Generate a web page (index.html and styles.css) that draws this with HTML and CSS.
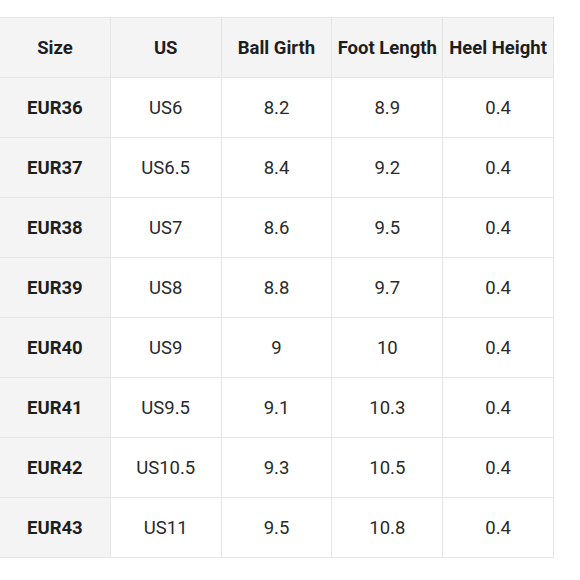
FILE: index.html
```html
<!DOCTYPE html>
<html>
<head>
<meta charset="utf-8">
<link rel="stylesheet" href="styles.css">
</head>
<body>
<table class="size-table">
  <thead>
    <tr><th>Size</th><th>US</th><th>Ball Girth</th><th>Foot Length</th><th>Heel Height</th></tr>
  </thead>
  <tbody>
    <tr><th>EUR36</th><td>US6</td><td>8.2</td><td>8.9</td><td>0.4</td></tr>
    <tr><th>EUR37</th><td>US6.5</td><td>8.4</td><td>9.2</td><td>0.4</td></tr>
    <tr><th>EUR38</th><td>US7</td><td>8.6</td><td>9.5</td><td>0.4</td></tr>
    <tr><th>EUR39</th><td>US8</td><td>8.8</td><td>9.7</td><td>0.4</td></tr>
    <tr><th>EUR40</th><td>US9</td><td>9</td><td>10</td><td>0.4</td></tr>
    <tr><th>EUR41</th><td>US9.5</td><td>9.1</td><td>10.3</td><td>0.4</td></tr>
    <tr><th>EUR42</th><td>US10.5</td><td>9.3</td><td>10.5</td><td>0.4</td></tr>
    <tr><th>EUR43</th><td>US11</td><td>9.5</td><td>10.8</td><td>0.4</td></tr>
  </tbody>
</table>
</body>
</html>
```
FILE: styles.css
```css
html, body {
  margin: 0;
  padding: 0;
  background: #ffffff;
}
body {
  padding-top: 17px;
  font-family: Roboto, "Liberation Sans", sans-serif;
  color: #222222;
}
.size-table {
  border-collapse: collapse;
  table-layout: fixed;
  width: 555px;
  margin-left: -1px;
}
.size-table th,
.size-table td {
  border: 1px solid #e6e6e6;
  height: 59px;
  padding: 0;
  text-align: center;
  vertical-align: middle;
  font-size: 18.5px;
}
.size-table th {
  background: #f4f4f4;
  font-weight: 700;
  color: #1e1e1e;
}
.size-table td {
  background: #ffffff;
  font-weight: 400;
  color: #2a2a2a;
}
```
